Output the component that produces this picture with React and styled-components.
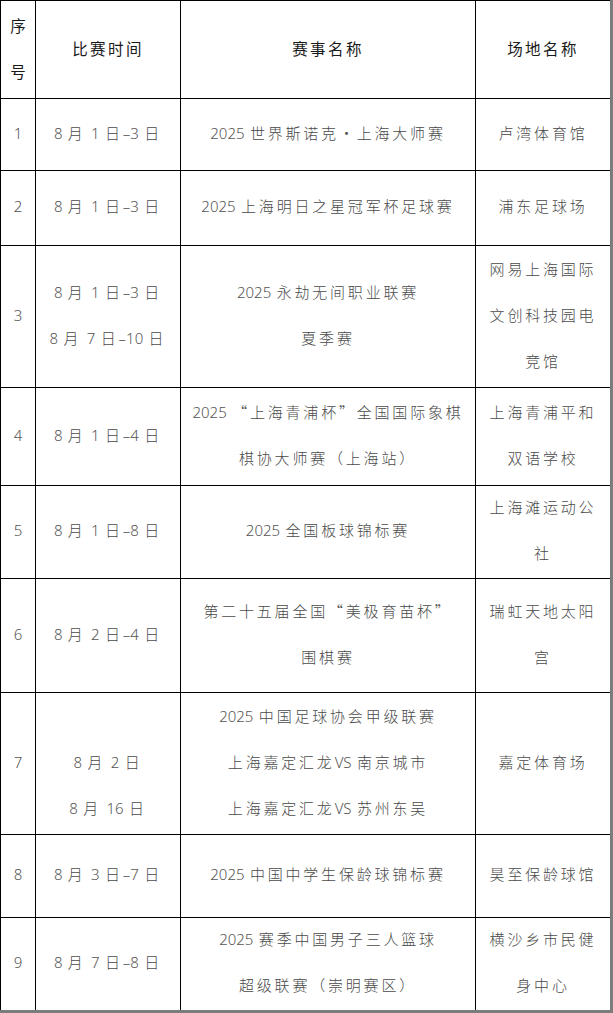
import React from 'react';
import styled, { createGlobalStyle } from 'styled-components';

const GlobalStyle = createGlobalStyle`
  html, body {
    margin: 0;
    padding: 0;
    background: #fff;
  }
`;

const Page = styled.div`
  width: 613px;
  height: 1013px;
  box-sizing: border-box;
  border-right: 3px solid #7c7c7c;
  border-bottom: 3px solid #7c7c7c;
  overflow: hidden;
  background: #fff;
`;

const Table = styled.table`
  width: 610px;
  border-collapse: collapse;
  table-layout: fixed;
  font-family: 'Noto Sans CJK SC', 'Noto Sans', sans-serif;
`;

const Row = styled.tr`
  height: ${(p) => p.h}px;
`;

const HeadCell = styled.th`
  border: 1px solid #000;
  padding: 0;
  text-align: center;
  vertical-align: middle;
  font-size: 15.5px;
  font-weight: 400;
  color: #1a1a1a;
  letter-spacing: ${(p) => (p.narrow ? 0 : '2.4px')};
  white-space: nowrap;
`;

const Cell = styled.td`
  border: 1px solid #000;
  padding: 0;
  text-align: center;
  vertical-align: middle;
  font-size: 15px;
  font-weight: 300;
  color: #4a4a4a;
  letter-spacing: 2.8px;
  white-space: nowrap;
`;

const Line = styled.div`
  height: 46px;
  line-height: 42px;
`;

const Latin = styled.span`
  font-family: 'Noto Sans', 'DejaVu Sans', sans-serif;
  font-weight: 300;
  letter-spacing: 0;
  word-spacing: 1.5px;
  color: #555;
`;

const Txt = ({ children }) => {
  const parts = String(children).split(/([\x20-\x7E–]+)/);
  return parts.map((s, i) =>
    /^[\x20-\x7E–]+$/.test(s) ? <Latin key={i}>{s}</Latin> : s
  );
};

const Lines = ({ items }) => {
  const arr = Array.isArray(items) ? items : [items];
  return arr.map((t, i) => (
    <Line key={i}>{t ? <Txt>{t}</Txt> : '\u00a0'}</Line>
  ));
};

const rows = [
  { h: 72, date: '8 月 1 日–3 日', name: '2025 世界斯诺克・上海大师赛', place: '卢湾体育馆' },
  { h: 75, date: '8 月 1 日–3 日', name: '2025 上海明日之星冠军杯足球赛', place: '浦东足球场' },
  {
    h: 142,
    date: ['8 月 1 日–3 日', '8 月 7 日–10 日'],
    name: ['2025 永劫无间职业联赛', '夏季赛'],
    place: ['网易上海国际', '文创科技园电', '竞馆'],
  },
  {
    h: 98,
    date: '8 月 1 日–4 日',
    name: ['2025 “上海青浦杯”全国国际象棋', '棋协大师赛（上海站）'],
    place: ['上海青浦平和', '双语学校'],
  },
  { h: 93, date: '8 月 1 日–8 日', name: '2025 全国板球锦标赛', place: ['上海滩运动公', '社'] },
  {
    h: 114,
    date: '8 月 2 日–4 日',
    name: ['第二十五届全国“美极育苗杯”', '围棋赛'],
    place: ['瑞虹天地太阳', '宫'],
  },
  {
    h: 142,
    date: ['', '8 月 2 日', '8 月 16 日'],
    name: ['2025 中国足球协会甲级联赛', '上海嘉定汇龙VS 南京城市', '上海嘉定汇龙VS 苏州东吴'],
    place: '嘉定体育场',
  },
  { h: 83, date: '8 月 3 日–7 日', name: '2025 中国中学生保龄球锦标赛', place: '昊至保龄球馆' },
  {
    h: 91,
    date: '8 月 7 日–8 日',
    name: ['2025 赛季中国男子三人篮球', '超级联赛（崇明赛区）'],
    place: ['横沙乡市民健', '身中心'],
  },
];

const App = () => {
  return (
    <Page>
      <GlobalStyle />
      <Table>
        <colgroup>
          <col style={{ width: 35 }} />
          <col style={{ width: 145 }} />
          <col style={{ width: 295 }} />
          <col style={{ width: 135 }} />
        </colgroup>
        <tbody>
          <Row h={98}>
            <HeadCell narrow>
              <Line>序</Line>
              <Line>号</Line>
            </HeadCell>
            <HeadCell>
              <Line>比赛时间</Line>
            </HeadCell>
            <HeadCell>
              <Line>赛事名称</Line>
            </HeadCell>
            <HeadCell>
              <Line>场地名称</Line>
            </HeadCell>
          </Row>
          {rows.map((r, i) => (
            <Row key={i} h={r.h}>
              <Cell>
                <Line>
                  <Latin>{i + 1}</Latin>
                </Line>
              </Cell>
              <Cell>
                <Lines items={r.date} />
              </Cell>
              <Cell>
                <Lines items={r.name} />
              </Cell>
              <Cell>
                <Lines items={r.place} />
              </Cell>
            </Row>
          ))}
        </tbody>
      </Table>
    </Page>
  );
};

export default App;
